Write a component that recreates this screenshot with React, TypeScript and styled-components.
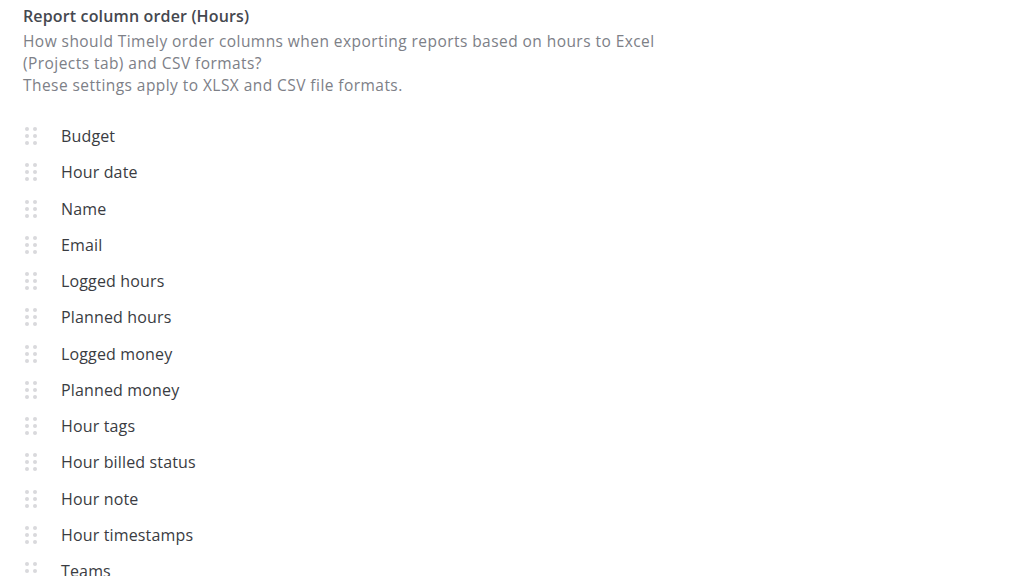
import styled, { createGlobalStyle } from 'styled-components';

const GlobalStyle = createGlobalStyle`
  body {
    margin: 0;
    background: #ffffff;
    font-family: "Open Sans", Lato, sans-serif;
  }
`;

const Section = styled.div`
  padding: 5px 23px 0;
`;

const Title = styled.h3`
  margin: 0;

  font-size: 16px;
  font-weight: 600;
  line-height: 22px;
  letter-spacing: 0.15px;
  color: #45484f;
`;

const Description = styled.p`
  margin: 3px 0 0;

  font-size: 15.5px;
  line-height: 22px;
  letter-spacing: 0.44px;
  color: #7d8087;
`;

const ColumnList = styled.ul`
  margin: 22px 0 0;
  padding: 0;

  list-style: none;
`;

const ColumnRow = styled.li`
  height: 36.25px;

  display: flex;
  align-items: center;
  gap: 23px;

  font-size: 16px;
  letter-spacing: 0.15px;
  color: #3a3c42;
`;

const Handle = styled.span`
  width: 13px;
  height: 18px;

  display: grid;
  grid-template-columns: repeat(2, 4px);
  grid-template-rows: repeat(3, 4px);
  column-gap: 4px;
  row-gap: 3px;
  align-content: center;
  padding-left: 2px;

  cursor: grab;
`;

const Dot = styled.span`
  width: 4px;
  height: 4px;
  border-radius: 50%;
  background: #d9d9dc;
`;

const columns = [
  'Budget',
  'Hour date',
  'Name',
  'Email',
  'Logged hours',
  'Planned hours',
  'Logged money',
  'Planned money',
  'Hour tags',
  'Hour billed status',
  'Hour note',
  'Hour timestamps',
  'Teams',
];

export default function App() {
  return (
    <>
      <GlobalStyle />
      <Section>
        <Title>Report column order (Hours)</Title>
        <Description>
          How should Timely order columns when exporting reports based on hours to Excel
          <br />
          (Projects tab) and CSV formats?
          <br />
          These settings apply to XLSX and CSV file formats.
        </Description>
        <ColumnList>
          {columns.map((name) => (
            <ColumnRow key={name}>
              <Handle>
                {Array.from({ length: 6 }).map((_, i) => (
                  <Dot key={i} />
                ))}
              </Handle>
              {name}
            </ColumnRow>
          ))}
        </ColumnList>
      </Section>
    </>
  );
}
